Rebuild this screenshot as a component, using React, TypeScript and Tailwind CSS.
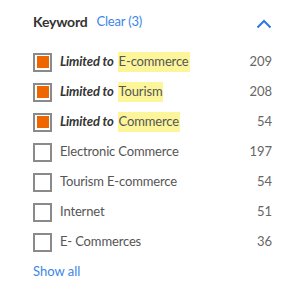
import React from "react";

const rows = [
  { label: "E-commerce", count: 209, checked: true },
  { label: "Tourism", count: 208, checked: true },
  { label: "Commerce", count: 54, checked: true },
  { label: "Electronic Commerce", count: 197, checked: false },
  { label: "Tourism E-commerce", count: 54, checked: false },
  { label: "Internet", count: 51, checked: false },
  { label: "E- Commerces", count: 36, checked: false },
];

export default function App() {
  return (
    <div
      className="w-[300px] h-[297px] bg-white pl-[33px] pr-[28px] pt-[11px]"
      style={{ fontFamily: "Lato, 'Open Sans', sans-serif" }}
    >
      <div className="flex items-center h-[21px]">
        <span className="text-[14px] font-bold text-[#333] tracking-[-0.2px]">Keyword</span>
        <span className="ml-[9px] text-[13px] text-[#3a86e8] tracking-[-0.2px]">Clear (3)</span>
        <svg className="ml-auto mt-[4px]" width="16" height="10" viewBox="0 0 16 10" fill="none">
          <path d="M1.5 8.5L8 2l6.5 6.5" stroke="#2b78e4" strokeWidth="2" />
        </svg>
      </div>
      <div className="mt-[15px] flex flex-col">
        {rows.map((r, i) => (
          <div key={i} className="flex items-center h-[30px]">
            <div className="w-[19px] h-[19px] border-2 border-[#8a8a8a] p-[1.5px] flex-none">
              {r.checked && <div className="w-full h-full bg-[#ee6600]" />}
            </div>
            <div className="ml-[8px] text-[13px] text-[#555] flex items-center tracking-[-0.15px]">
              {r.checked ? (
                <>
                  <span className="font-bold italic text-[#333]">Limited to</span>
                  <span className="ml-[4px] bg-[#fdf59a] px-[1px]">{r.label}</span>
                </>
              ) : (
                <span>{r.label}</span>
              )}
            </div>
            <span className="ml-auto text-[13px] text-[#666]">{r.count}</span>
          </div>
        ))}
      </div>
      <div className="mt-[5px] text-[13px] text-[#3a86e8]">Show all</div>
    </div>
  );
}
